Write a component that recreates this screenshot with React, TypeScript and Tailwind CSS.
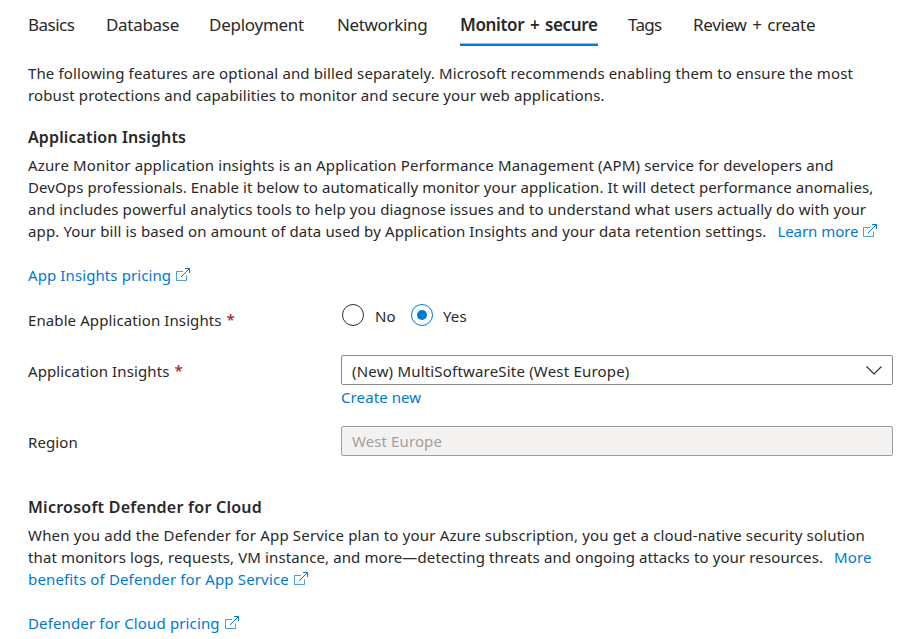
import React from "react";

type TabItem = { label: string; width: string; tracking: string; active?: boolean };

const tabs: TabItem[] = [
  { label: "Basics", width: "w-[78px]", tracking: "tracking-[-0.5px]" },
  { label: "Database", width: "w-[103px]", tracking: "tracking-[-0.3px]" },
  { label: "Deployment", width: "w-[128px]", tracking: "tracking-[-0.26px]" },
  { label: "Networking", width: "w-[123px]", tracking: "tracking-[-0.35px]" },
  {
    label: "Monitor + secure",
    width: "w-[168px]",
    tracking: "tracking-[-0.35px] [word-spacing:1.6px]",
    active: true,
  },
  { label: "Tags", width: "w-[65px]", tracking: "tracking-[-0.7px]" },
  { label: "Review + create", width: "w-[130px]", tracking: "tracking-[-0.3px] [word-spacing:1.5px]" },
];

function ExternalIcon() {
  return (
    <svg
      className="ml-[5px] inline-block shrink-0 align-[-1px]"
      width="14"
      height="14"
      viewBox="0 0 14 14"
      fill="none"
      stroke="#0078d4"
      strokeWidth="1"
    >
      <path d="M7 3.5H.5v9h10V7.5" opacity=".7" />
      <path d="M5 9 13.5 .5M9 .5h4.5V5" />
    </svg>
  );
}

function Line({ children, tracking }: { children: React.ReactNode; tracking: string }) {
  return <span className={`block h-[22px] whitespace-nowrap ${tracking}`}>{children}</span>;
}

function Link({ children, tracking = "" }: { children: React.ReactNode; tracking?: string }) {
  return <a className={`text-[#0078d4] ${tracking}`}>{children}</a>;
}

function Required() {
  return <span className="ml-[5px] align-[1px] text-[15px] leading-[20px] font-medium text-[#a4262c]">*</span>;
}

export default function App() {
  return (
    <main className="h-[639px] w-[904px] overflow-hidden bg-white pl-7 font-['Noto_Sans','Open_Sans',sans-serif] text-[15px] leading-[22px] tracking-[0.1px] text-[#292827]">
      <nav className="flex h-[46px] text-[17px]">
        {tabs.map((t) => (
          <div key={t.label} className={`shrink-0 whitespace-nowrap ${t.width} ${t.tracking}`}>
            <div
              className={
                t.active
                  ? "flex h-[46px] w-[138px] flex-col justify-between pt-[14px] font-semibold"
                  : "h-[46px] pt-[14px]"
              }
            >
              {t.label}
              {t.active && <span className="h-[3px] border-t border-[#8cc3ec] bg-[#0078d4]" />}
            </div>
          </div>
        ))}
      </nav>

      <p className="mt-[16px]">
        <Line tracking="tracking-[0.13px]">
          The following features are optional and billed separately. Microsoft recommends enabling them to ensure the most
        </Line>
        <Line tracking="tracking-[0.125px]">
          robust protections and capabilities to monitor and secure your web applications.
        </Line>
      </p>

      <h2 className="mt-[20px] text-[16px] font-semibold tracking-[0.12px]">Application Insights</h2>
      <p className="mt-[6px]">
        <Line tracking="tracking-[0.148px]">
          Azure Monitor application insights is an Application Performance Management (APM) service for developers and
        </Line>
        <Line tracking="tracking-[0.105px]">
          DevOps professionals. Enable it below to automatically monitor your application. It will detect performance anomalies,
        </Line>
        <Line tracking="tracking-[0.115px]">
          and includes powerful analytics tools to help you diagnose issues and to understand what users actually do with your
        </Line>
        <Line tracking="tracking-[0.125px]">
          app. Your bill is based on amount of data used by Application Insights and your data retention settings.
          <span className="ml-[11px]">
            <Link tracking="tracking-[-0.05px]">Learn more</Link>
            <ExternalIcon />
          </span>
        </Line>
      </p>

      <p className="mt-[22px]">
        <Line tracking="tracking-[0.1px]">
          <Link>App Insights pricing</Link>
          <ExternalIcon />
        </Line>
      </p>

      <div className="mt-[18px] flex h-[51px]">
        <label className="w-[314px] pt-[5px]">
          Enable Application Insights
          <Required />
        </label>
        <div className="flex h-[22px]">
          <span className="h-[22px] w-[22px] rounded-full border border-[#323130]" />
          <span className="ml-[11px] w-[36px] pt-px">No</span>
          <span className="flex h-[22px] w-[22px] items-center justify-center rounded-full border border-[#0078d4]">
            <span className="h-[10px] w-[10px] rounded-full bg-[#0078d4]" />
          </span>
          <span className="ml-[10px] pt-px">Yes</span>
        </div>
      </div>

      <div className="flex h-[71px]">
        <label className="w-[313px] pt-[5px]">
          Application Insights
          <Required />
        </label>
        <div className="w-[552px]">
          <div className="flex h-[30px] items-center justify-between rounded-[2px] border border-[#8a8886] pt-px pr-[10px] pl-[10px]">
            <span className="tracking-[0.19px]">(New) MultiSoftwareSite (West Europe)</span>
            <svg width="16" height="9" viewBox="0 0 16 9" fill="none" stroke="#323130" strokeWidth="1.2">
              <path d="M.5 .5 8 8 15.5 .5" />
            </svg>
          </div>
          <div className="mt-px">
            <Link>Create new</Link>
          </div>
        </div>
      </div>

      <div className="flex h-[70px]">
        <label className="w-[313px] pt-[5px]">Region</label>
        <div className="flex h-[30px] w-[552px] items-center rounded-[2px] border border-[#a19f9d] bg-[#f3f2f1] pl-[10px] tracking-[0.1px] text-[#a19f9d]">
          West Europe
        </div>
      </div>

      <h2 className="text-[16px] font-semibold tracking-[0.25px]">Microsoft Defender for Cloud</h2>
      <p className="mt-[6px]">
        <Line tracking="tracking-[0.175px]">
          When you add the Defender for App Service plan to your Azure subscription, you get a cloud-native security solution
        </Line>
        <Line tracking="tracking-[0.115px]">
          that monitors logs, requests, VM instance, and more—detecting threats and ongoing attacks to your resources.
          <span className="ml-[11px]">
            <Link>More</Link>
          </span>
        </Line>
        <Line tracking="tracking-[0.15px]">
          <Link>benefits of Defender for App Service</Link>
          <ExternalIcon />
        </Line>
      </p>
      <p className="mt-[22px]">
        <Line tracking="tracking-[0.14px]">
          <Link>Defender for Cloud pricing</Link>
          <ExternalIcon />
        </Line>
      </p>
    </main>
  );
}
